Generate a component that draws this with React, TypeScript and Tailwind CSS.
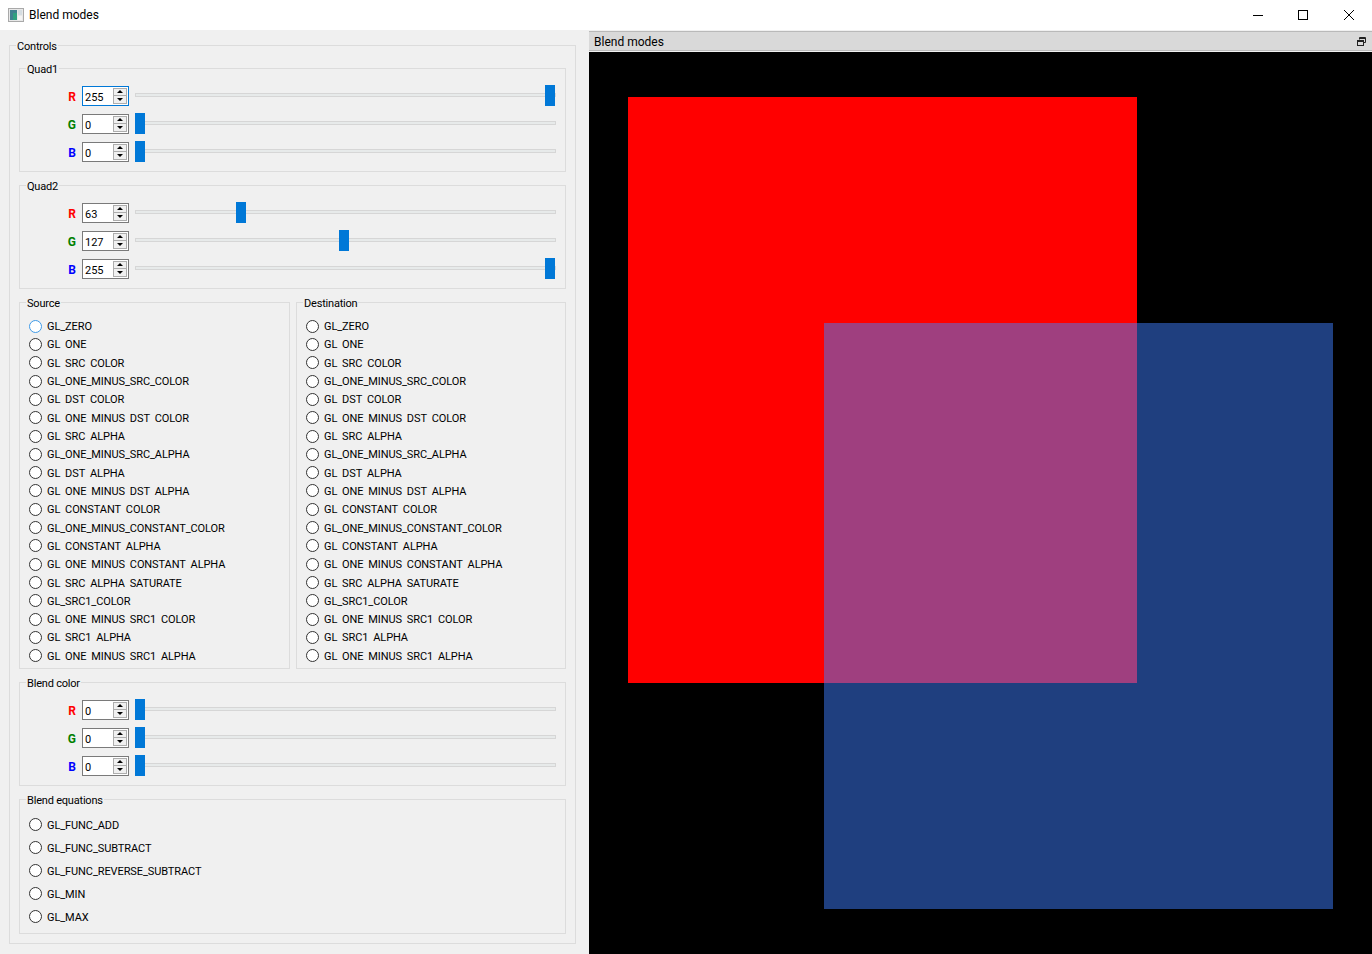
const blendFactors: [string, boolean][] = [
  ['GL_ZERO', false],
  ['GL_ONE', true],
  ['GL_SRC_COLOR', true],
  ['GL_ONE_MINUS_SRC_COLOR', false],
  ['GL_DST_COLOR', true],
  ['GL_ONE_MINUS_DST_COLOR', true],
  ['GL_SRC_ALPHA', true],
  ['GL_ONE_MINUS_SRC_ALPHA', false],
  ['GL_DST_ALPHA', true],
  ['GL_ONE_MINUS_DST_ALPHA', true],
  ['GL_CONSTANT_COLOR', true],
  ['GL_ONE_MINUS_CONSTANT_COLOR', false],
  ['GL_CONSTANT_ALPHA', true],
  ['GL_ONE_MINUS_CONSTANT_ALPHA', true],
  ['GL_SRC_ALPHA_SATURATE', true],
  ['GL_SRC1_COLOR', false],
  ['GL_ONE_MINUS_SRC1_COLOR', true],
  ['GL_SRC1_ALPHA', true],
  ['GL_ONE_MINUS_SRC1_ALPHA', true],
];

const equations = ['GL_FUNC_ADD', 'GL_FUNC_SUBTRACT', 'GL_FUNC_REVERSE_SUBTRACT', 'GL_MIN', 'GL_MAX'];

function GroupBox({ title, className, children }: { title: string; className: string; children: React.ReactNode }) {
  return (
    <div className={`relative border border-[#dcdcdc] ${className}`}>
      <span className="absolute -top-[8px] left-[6px] bg-[#f0f0f0] px-[1px] pt-[1px] text-[11px] leading-[15px] tracking-[-0.2px] whitespace-nowrap">
        {title}
      </span>
      {children}
    </div>
  );
}

function SpinBox({ value, focused }: { value: number; focused?: boolean }) {
  return (
    <div className={`flex h-[20px] w-[47px] items-center justify-between border bg-white pl-[2px] pr-[1px] ${focused ? 'border-[#0078d7]' : 'border-[#7a7a7a]'}`}>
      <span className="pt-[3px] text-[11px] leading-[15px]">{value}</span>
      <div className="flex h-[16px] w-[14px] flex-col border border-[#adadad] bg-[#f0f0f0]">
        <div className="flex flex-1 items-center justify-center border-b border-[#adadad]">
          <div className="h-0 w-0 border-x-[3px] border-b-[3px] border-x-transparent border-b-black" />
        </div>
        <div className="flex flex-1 items-center justify-center">
          <div className="h-0 w-0 border-x-[3px] border-t-[3px] border-x-transparent border-t-black" />
        </div>
      </div>
    </div>
  );
}

function Slider({ value }: { value: number }) {
  return (
    <div className="relative h-[21px] flex-1">
      <div className="absolute left-0 right-0 top-[8px] h-[4px] border border-[#d6d6d6] bg-[#e7eaea]" />
      <div
        className="absolute top-0 h-[21px] w-[10px] bg-[#0078d7]"
        style={{ left: Math.round((value / 255) * 410) }}
      />
    </div>
  );
}

function ColorRow({ label, color, value, focused }: { label: string; color: string; value: number; focused?: boolean }) {
  return (
    <div className="flex h-[21px] items-center gap-[6px]">
      <span className={`w-[56px] pt-[2px] text-right text-[12px] font-bold leading-[16px] ${color}`}>{label}</span>
      <SpinBox value={value} focused={focused} />
      <Slider value={value} />
    </div>
  );
}

function ColorGroup({ title, r, g, b, focused }: { title: string; r: number; g: number; b: number; focused?: boolean }) {
  return (
    <GroupBox title={title} className="flex h-[104px] flex-col gap-[7px] pb-[8px] pr-[9px] pt-[16px]">
      <ColorRow label="R" color="text-[#ff0000]" value={r} focused={focused} />
      <ColorRow label="G" color="text-[#008000]" value={g} />
      <ColorRow label="B" color="text-[#0000ff]" value={b} />
    </GroupBox>
  );
}

function Radio({ label, focused, clipped }: { label: string; focused?: boolean; clipped?: boolean }) {
  // the underscores of most rows fall below the row's clip in the reference
  const parts = clipped ? label.split('_') : [label];
  return (
    <div className="flex min-h-0 flex-1 items-center gap-[5px] pl-[9px]">
      <div className={`h-[13px] w-[13px] shrink-0 rounded-full border-[1.5px] bg-white ${focused ? 'border-[#3f9be8]' : 'border-[#333333]'}`} />
      <div className="whitespace-nowrap pt-[2px] text-[11px] leading-[16px] tracking-[-0.1px]">
        {parts.map((part, i) => (
          <span key={i}>
            {i > 0 && <span className="text-transparent">_</span>}
            {part}
          </span>
        ))}
      </div>
    </div>
  );
}

function FactorGroup({ title, className, focused }: { title: string; className: string; focused?: boolean }) {
  return (
    <GroupBox title={title} className={`flex h-[367px] flex-col pb-[3px] pt-[14px] ${className}`}>
      {blendFactors.map(([name, clipped], i) => (
        <Radio key={name} label={name} clipped={clipped} focused={focused && i === 0} />
      ))}
    </GroupBox>
  );
}

function AppIcon() {
  return (
    <svg width="16" height="16" viewBox="0 0 16 16" className="shrink-0">
      <rect x="0.5" y="1.5" width="15" height="13" fill="#e8e8e8" stroke="#a9a9a9" />
      <rect x="2" y="3" width="7" height="10" fill="#3f7f8f" />
      <rect x="5" y="6" width="4" height="7" fill="#2f9f7f" />
      <rect x="10" y="3" width="4" height="5" fill="#d5dde2" />
      <rect x="10" y="9" width="4" height="4" fill="#f4f4f4" />
    </svg>
  );
}

export default function App() {
  return (
    <div className="flex h-[954px] w-[1372px] flex-col overflow-hidden bg-[#f0f0f0] font-['Roboto',sans-serif] text-black">
      <div className="flex h-[30px] shrink-0 items-center bg-white pl-[8px]">
        <AppIcon />
        <span className="ml-[5px] text-[12px] leading-[16px]">Blend modes</span>
        <div className="ml-auto flex items-center pr-[18px]">
          <svg width="10" height="10" viewBox="0 0 10 10" stroke="#000000" fill="none">
            <path d="M0 5.5H10" />
          </svg>
          <svg width="10" height="10" viewBox="0 0 10 10" stroke="#000000" fill="none" className="ml-[35px]">
            <rect x="0.5" y="0.5" width="9" height="9" />
          </svg>
          <svg width="10" height="10" viewBox="0 0 10 10" stroke="#000000" fill="none" className="ml-[36px]">
            <path d="M0 0L10 10M10 0L0 10" />
          </svg>
        </div>
      </div>
      <div className="flex min-h-0 flex-1">
        <div className="w-[589px] shrink-0 pl-[9px] pt-[15px]">
          <GroupBox title="Controls" className="flex h-[899px] w-[567px] flex-col gap-[13px] px-[9px] pt-[22px]">
            <ColorGroup title="Quad1" r={255} g={0} b={0} focused />
            <ColorGroup title="Quad2" r={63} g={127} b={255} />
            <div className="flex gap-[6px]">
              <FactorGroup title="Source" className="w-[271px]" focused />
              <FactorGroup title="Destination" className="w-[270px]" />
            </div>
            <ColorGroup title="Blend color" r={0} g={0} b={0} />
            <GroupBox title="Blend equations" className="flex h-[135px] flex-col pb-[5px] pt-[13px]">
              {equations.map((name) => (
                <Radio key={name} label={name} />
              ))}
            </GroupBox>
          </GroupBox>
        </div>
        <div className="flex min-w-0 flex-1 flex-col pt-[1px]">
          <div className="flex h-[20px] shrink-0 items-center justify-between border-y border-[#b9b9b9] bg-[#d9d9d9] pl-[5px] pr-[6px]">
            <span className="pt-[1px] text-[12px] leading-[16px]">Blend modes</span>
            <svg width="9" height="9" viewBox="0 0 9 9" fill="none" stroke="#222222">
              <path d="M2.5 2.5V0.5H8.5V5.5H6.5" />
              <path d="M2.5 1.5H8.5" />
              <rect x="0.5" y="3.5" width="6" height="5" />
              <path d="M0.5 4.5H6.5" />
            </svg>
          </div>
          <div className="relative mt-[1px] flex-1 bg-black">
            <div className="absolute left-[39px] top-[45px] h-[586px] w-[509px] bg-[#ff0000]" />
            <div className="absolute left-[235px] top-[271px] h-[586px] w-[509px] bg-[#1f3f7f]" />
            <div className="absolute left-[235px] top-[271px] h-[360px] w-[313px] bg-[#9f3f7f]" />
          </div>
        </div>
      </div>
    </div>
  );
}
